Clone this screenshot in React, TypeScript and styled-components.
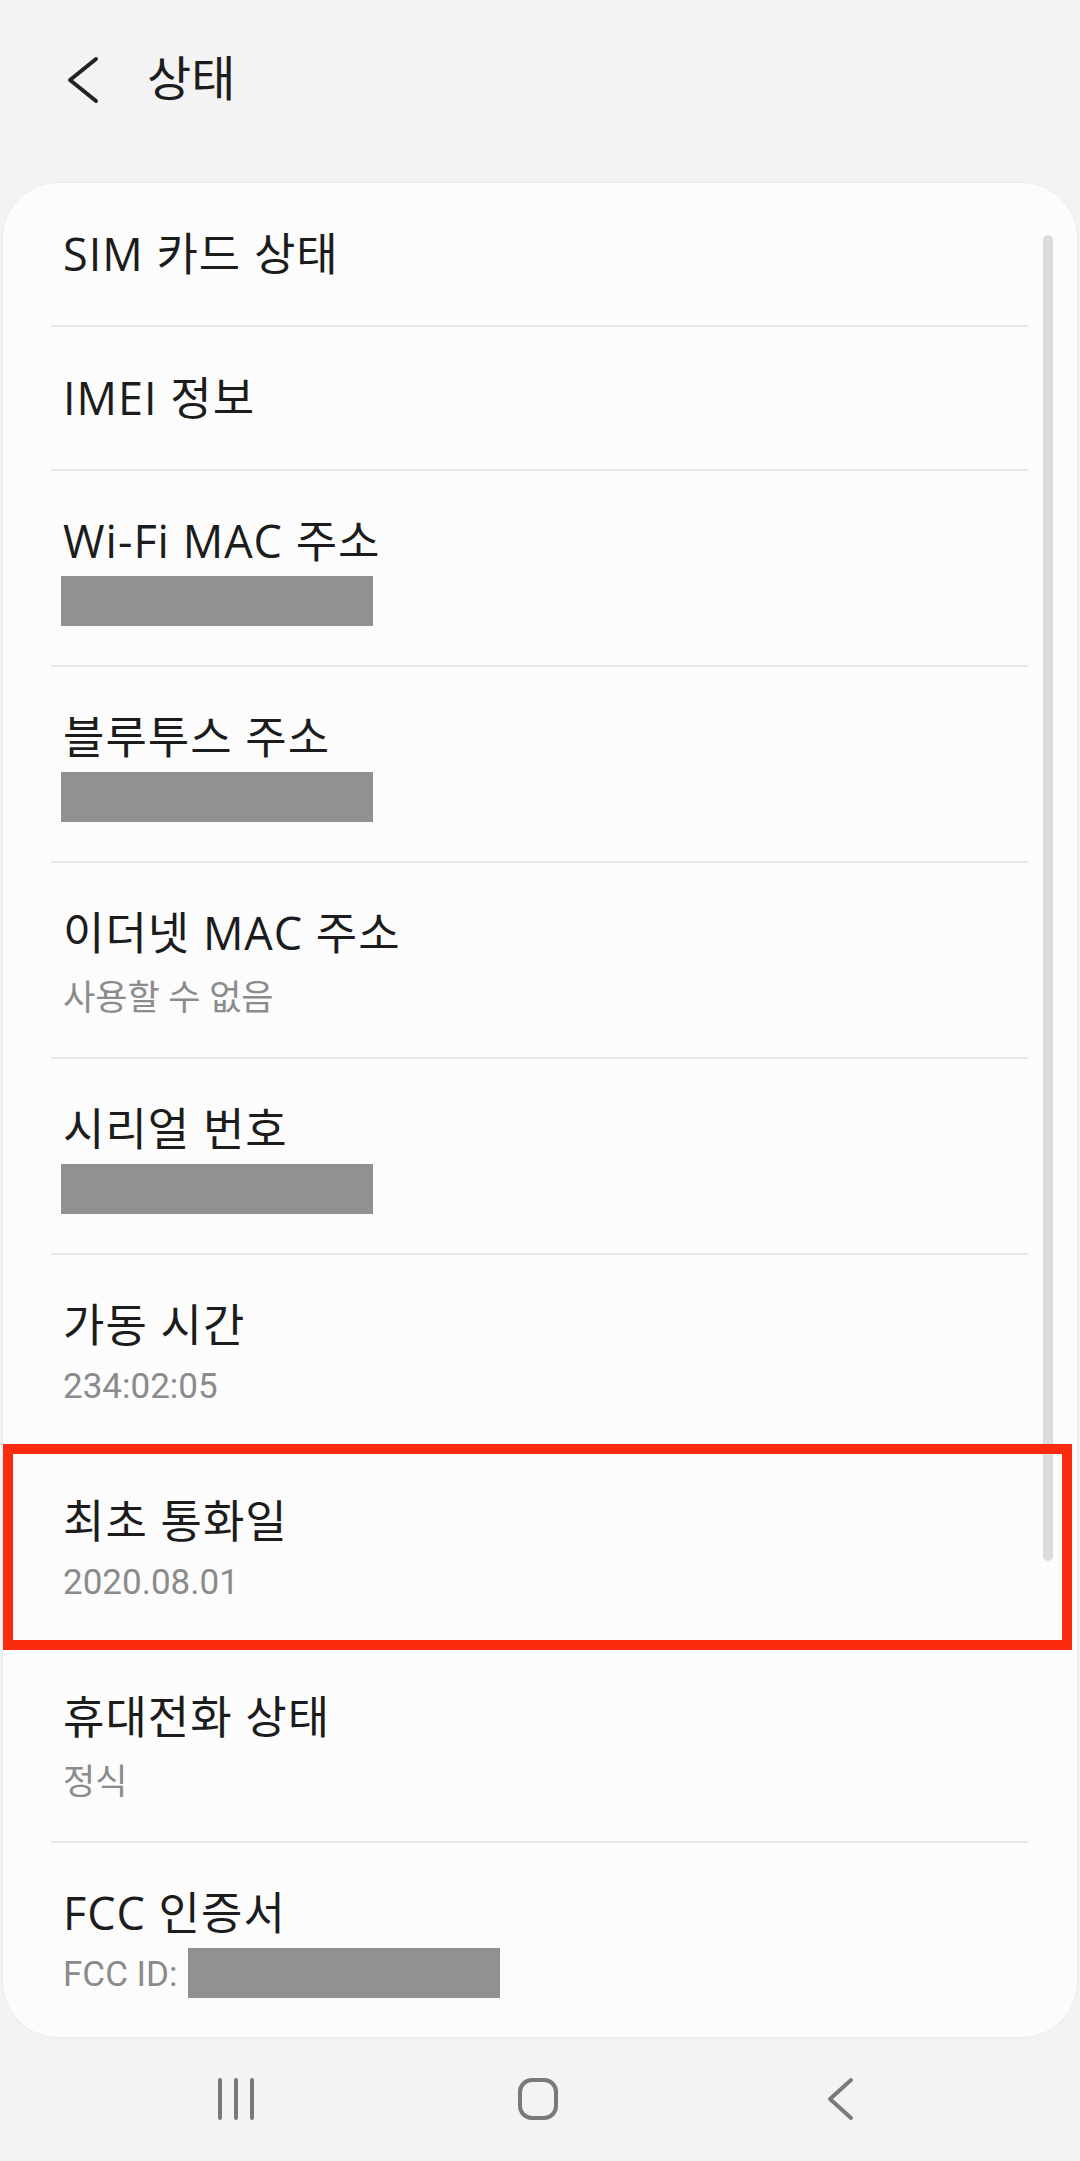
import styled, { createGlobalStyle } from "styled-components";

const GlobalStyle = createGlobalStyle`
  html, body {
    margin: 0;
    background: #f3f3f3;
    font-family: Roboto, "Noto Sans CJK KR", sans-serif;
  }
`;

type Item = {
  title: string;
  summary?: string;
  prefix?: string;
  redacted?: boolean;
  highlight?: boolean;
};

const items: Item[] = [
  { title: "SIM 카드 상태" },
  { title: "IMEI 정보" },
  { title: "Wi-Fi MAC 주소", redacted: true },
  { title: "블루투스 주소", redacted: true },
  { title: "이더넷 MAC 주소", summary: "사용할 수 없음" },
  { title: "시리얼 번호", redacted: true },
  { title: "가동 시간", summary: "234:02:05" },
  { title: "최초 통화일", summary: "2020.08.01", highlight: true },
  { title: "휴대전화 상태", summary: "정식" },
  { title: "FCC 인증서", prefix: "FCC ID:", redacted: true },
];

export default function App() {
  return (
    <Screen>
      <GlobalStyle />
      <Header>
        <BackButton>
          <svg width="34" height="48" viewBox="0 0 34 48">
            <path
              d="M30 3 L4 24 L30 45"
              fill="none"
              stroke="#222"
              strokeWidth="4"
              strokeLinecap="round"
              strokeLinejoin="round"
            />
          </svg>
        </BackButton>
        <PageTitle>상태</PageTitle>
      </Header>

      <Card>
        <List>
          {items.map((item) => {
            const twoLine = !!(item.summary || item.redacted);
            return (
              <Row key={item.title} $twoLine={twoLine} $highlight={item.highlight}>
                <Title>{item.title}</Title>
                {twoLine && (
                  <Summary>
                    {item.prefix && <Prefix>{item.prefix}</Prefix>}
                    {item.summary}
                    {item.redacted && <Redacted $inline={!!item.prefix} />}
                  </Summary>
                )}
              </Row>
            );
          })}
        </List>
        <ScrollThumb />
      </Card>

      <NavBar>
        <NavButton>
          <svg width="44" height="44" viewBox="0 0 44 44">
            <g stroke="#7a7a7a" strokeWidth="4" strokeLinecap="round">
              <line x1="4" y1="3" x2="4" y2="41" />
              <line x1="20" y1="3" x2="20" y2="41" />
              <line x1="36" y1="3" x2="36" y2="41" />
            </g>
          </svg>
        </NavButton>
        <NavButton>
          <svg width="44" height="44" viewBox="0 0 44 44">
            <rect
              x="2"
              y="3"
              width="36"
              height="38"
              rx="12"
              fill="none"
              stroke="#7a7a7a"
              strokeWidth="4"
            />
          </svg>
        </NavButton>
        <NavButton>
          <svg width="44" height="44" viewBox="0 0 44 44">
            <path
              d="M31 3 L10 22 L31 41"
              fill="none"
              stroke="#7a7a7a"
              strokeWidth="4"
              strokeLinecap="round"
              strokeLinejoin="round"
            />
          </svg>
        </NavButton>
      </NavBar>
    </Screen>
  );
}

const Screen = styled.div`
  width: 1080px;
  min-height: 2161px;
  background: #f3f3f3;
  display: flex;
  flex-direction: column;
`;

const Header = styled.div`
  height: 160px;
  display: flex;
  align-items: center;
  padding-left: 66px;
`;

const BackButton = styled.div`
  width: 34px;
  height: 48px;
  display: flex;
  align-items: center;
`;

const PageTitle = styled.h1`
  margin: 0 0 0 47px;
  font-size: 48px;
  font-weight: 400;
  color: #1c1c1c;
  line-height: 60px;
`;

const Card = styled.div`
  position: relative;
  margin: 23px 3px 0;
  background: #fcfcfc;
  border-radius: 55px;
  box-shadow: 0 0 2px rgba(0, 0, 0, 0.1);
`;

const List = styled.div`
  padding: 0 49px 0 48px;
`;

const Row = styled.div<{ $twoLine: boolean; $highlight?: boolean }>`
  position: relative;
  box-sizing: border-box;
  height: ${(p) => (p.$twoLine ? "196px" : "144px")};
  padding: ${(p) => (p.$twoLine ? "40px 12px 0" : "0 12px")};
  display: flex;
  flex-direction: column;
  justify-content: ${(p) => (p.$twoLine ? "flex-start" : "center")};
  border-bottom: 2px solid #e5e5e5;

  &:last-child {
    border-bottom: none;
    height: 194px;
  }

  ${(p) =>
    p.$highlight &&
    `
    &::after {
      content: "";
      position: absolute;
      top: -7px;
      bottom: -5px;
      left: -48px;
      right: -44px;
      border: 10px solid #fb2b0f;
      z-index: 2;
    }
  `}
`;

const Title = styled.div`
  font-family: "Open Sans", "Noto Sans CJK KR", sans-serif;
  font-size: 45px;
  letter-spacing: 1px;
  line-height: 60px;
  color: #1c1c1c;
  white-space: nowrap;
`;

const Summary = styled.div`
  display: flex;
  align-items: center;
  height: 62px;
  font-size: 35px;
  color: #8b8b8b;
  white-space: nowrap;
`;

const Prefix = styled.span`
  margin-right: 10px;
`;

const Redacted = styled.span<{ $inline: boolean }>`
  display: block;
  width: 312px;
  height: 50px;
  margin-top: -2px;
  margin-left: ${(p) => (p.$inline ? "0" : "-2px")};
  background: #919191;
`;

const ScrollThumb = styled.div`
  position: absolute;
  top: 52px;
  right: 24px;
  width: 10px;
  height: 1326px;
  border-radius: 5px;
  background: #dcdcdc;
`;

const NavBar = styled.div`
  height: 124px;
  display: flex;
  justify-content: center;
  align-items: center;
`;

const NavButton = styled.div`
  width: 302px;
  display: flex;
  justify-content: center;
  align-items: center;
`;
